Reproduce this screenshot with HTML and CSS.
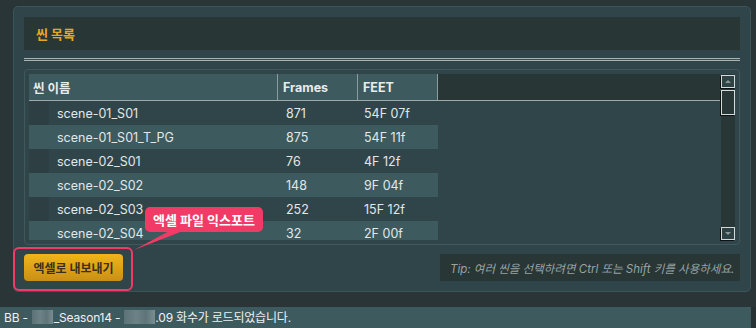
FILE: index.html
```html
<!DOCTYPE html>
<html lang="ko">
  <head>
    <meta charset="UTF-8" />
    <meta name="viewport" content="width=device-width, initial-scale=1.0" />
    <title>씬 목록</title>
    <link rel="stylesheet" href="styles.css">
  </head>
  <body>
    <div class="panel">
      <div class="panel-header">
        <h2>씬 목록</h2>
      </div>
      <div class="rule"></div>

      <div class="table-box">
        <div class="table-area">
          <div class="thead">
            <div class="th col-name">씬 이름</div>
            <div class="th col-frames">Frames</div>
            <div class="th col-feet">FEET</div>
            <div class="th-fill"></div>
          </div>
          <div class="tbody">
            <div class="row">
              <div class="indent"></div>
              <div class="td col-name">scene-01_S01</div>
              <div class="td col-frames">871</div>
              <div class="td col-feet">54F 07f</div>
            </div>
            <div class="row alt">
              <div class="indent"></div>
              <div class="td col-name">scene-01_S01_T_PG</div>
              <div class="td col-frames">875</div>
              <div class="td col-feet">54F 11f</div>
            </div>
            <div class="row">
              <div class="indent"></div>
              <div class="td col-name">scene-02_S01</div>
              <div class="td col-frames">76</div>
              <div class="td col-feet">4F 12f</div>
            </div>
            <div class="row alt">
              <div class="indent"></div>
              <div class="td col-name">scene-02_S02</div>
              <div class="td col-frames">148</div>
              <div class="td col-feet">9F 04f</div>
            </div>
            <div class="row">
              <div class="indent"></div>
              <div class="td col-name">scene-02_S03</div>
              <div class="td col-frames">252</div>
              <div class="td col-feet">15F 12f</div>
            </div>
            <div class="row alt">
              <div class="indent"></div>
              <div class="td col-name">scene-02_S04</div>
              <div class="td col-frames">32</div>
              <div class="td col-feet">2F 00f</div>
            </div>
          </div>
        </div>

        <div class="scrollbar">
          <div class="sb-btn"><span class="arrow up"></span></div>
          <div class="sb-thumb"></div>
          <div class="sb-track"></div>
          <div class="sb-btn"><span class="arrow down"></span></div>
        </div>
      </div>

      <div class="footer">
        <button class="btn-export">엑셀로 내보내기</button>
        <div class="tip">Tip: 여러 씬을 선택하려면 Ctrl 또는 Shift 키를 사용하세요.</div>
      </div>
    </div>

    <div class="status-bar">
      <div class="status-text">BB -<span class="blur b1"></span>_Season14 -<span class="blur b2"></span>.09 화수가 로드되었습니다.</div>
      <div class="status-edge"></div>
    </div>

    <!-- annotation -->
    <div class="mark-box"></div>
    <svg class="callout-tail" width="60" height="24" viewBox="0 0 60 24">
      <polygon points="42,0 57,0 3,21" fill="#f23a66" />
    </svg>
    <div class="callout">엑셀 파일 익스포트</div>
  </body>
</html>
```

FILE: styles.css
```css
* {
  margin: 0;
  padding: 0;
  box-sizing: border-box;
}
body {
  font-family: "Inter", "Noto Sans CJK KR", sans-serif;
  background: #293536;
  color: #e6eaea;
  width: 756px;
  height: 328px;
  overflow: hidden;
  position: relative;
  font-size: 12.5px;
}
.panel {
  margin: 6px 5px 0 13px;
  height: 286px;
  background: #30454a;
  border: 1px solid #3c555a;
  border-radius: 5px;
  padding: 10px 10px 0 10px;
}
.panel-header {
  height: 33px;
  background: #293636;
  display: flex;
  align-items: center;
  padding-left: 12px;
}
.panel-header h2 {
  font-size: 13px;
  font-weight: 700;
  color: #e5a91e;
}
.rule {
  margin-top: 8px;
  height: 3px;
  border-top: 1px solid #a9b3b2;
  border-bottom: 1px solid #a9b3b2;
  background: #3a4e52;
}
.table-box {
  margin-top: 8px;
  height: 176px;
  border: 1px solid #3e585c;
  border-radius: 4px;
  padding: 4px;
  display: flex;
  gap: 1px;
}
.table-area {
  flex: 1;
  overflow: hidden;
}
.thead {
  display: flex;
  height: 27px;
  border-bottom: 1px solid #9eaaaa;
  background: #293636;
}
.th {
  background: #3d5a5f;
  font-weight: 700;
  color: #e8ecec;
  display: flex;
  align-items: center;
  padding-left: 5px;
  border-right: 1px solid #8d9c9c;
}
.th.col-name {
  width: 249px;
  padding-left: 4px;
}
.th.col-frames,
.th.col-feet {
  width: 80px;
}
.th-fill {
  flex: 1;
}
.row {
  display: flex;
  height: 24px;
  align-items: stretch;
  width: 409px;
}
.row.alt {
  background: #3d5a5f;
}
.indent {
  width: 20px;
}
.row:not(.alt) .indent {
  background: #2d3f42;
}
.td {
  display: flex;
  align-items: center;
  color: #e2e7e7;
}
.td.col-name {
  width: 229px;
  padding-left: 8px;
}
.td.col-frames {
  width: 80px;
  padding-left: 8px;
}
.td.col-feet {
  width: 80px;
  padding-left: 6px;
}
.scrollbar {
  width: 14px;
  background: #283636;
  display: flex;
  flex-direction: column;
  padding-top: 1px;
}
.sb-btn {
  height: 13px;
  border: 1px solid #d4d9d9;
  box-shadow: -1px 1px 0 #0c1212;
  background: #2f4245;
  display: flex;
  align-items: center;
  justify-content: center;
}
.arrow {
  width: 0;
  height: 0;
  border-left: 3px solid transparent;
  border-right: 3px solid transparent;
}
.arrow.up {
  border-bottom: 3px solid #8c9898;
}
.arrow.down {
  border-top: 3px solid #8c9898;
}
.sb-thumb {
  margin-top: 2px;
  height: 25px;
  border: 1px solid #d4d9d9;
  box-shadow: -1px 1px 0 #0c1212;
  background: #283636;
}
.sb-track {
  flex: 1;
}
.footer {
  margin-top: 9px;
  display: flex;
  justify-content: space-between;
  align-items: center;
}
.btn-export {
  width: 99px;
  height: 27px;
  border: none;
  border-radius: 4px;
  background: linear-gradient(180deg, #f0b51a 0%, #c98f16 100%);
  color: #3a2f1c;
  font-family: "Inter", "Noto Sans CJK KR", sans-serif;
  font-size: 12px;
  font-weight: 700;
}
.tip {
  width: 300px;
  height: 27px;
  background: #293636;
  color: #98a4a4;
  font-style: italic;
  font-size: 11.5px;
  display: flex;
  align-items: center;
  padding-left: 10px;
  white-space: nowrap;
}
.status-bar {
  margin-top: 15px;
  height: 21px;
  display: flex;
}
.status-text {
  width: 751px;
  background: #3d5a5f;
  color: #eef1f1;
  font-size: 12px;
  letter-spacing: -0.2px;
  padding-left: 4px;
  line-height: 21px;
  white-space: nowrap;
}
.status-edge {
  flex: 1;
  background: #263233;
}
.blur {
  display: inline-block;
  height: 14px;
  vertical-align: -2px;
  background: linear-gradient(90deg, #5d7276 0%, #6c8286 40%, #5f7478 70%, #7a8e92 100%);
}
.blur.b1 {
  width: 21px;
  margin: 0 1px 0 4px;
}
.blur.b2 {
  width: 31px;
  margin: 0 0 0 4px;
}
.mark-box {
  position: absolute;
  left: 13px;
  top: 247px;
  width: 120px;
  height: 44px;
  border: 2px solid #f23a66;
  border-radius: 6px;
}
.callout-tail {
  position: absolute;
  left: 131px;
  top: 229px;
}
.callout {
  position: absolute;
  left: 145px;
  top: 207px;
  width: 118px;
  height: 25px;
  background: #f23a66;
  border-radius: 5px;
  color: #fff;
  font-weight: 700;
  font-size: 13px;
  display: flex;
  align-items: center;
  justify-content: center;
}
```
